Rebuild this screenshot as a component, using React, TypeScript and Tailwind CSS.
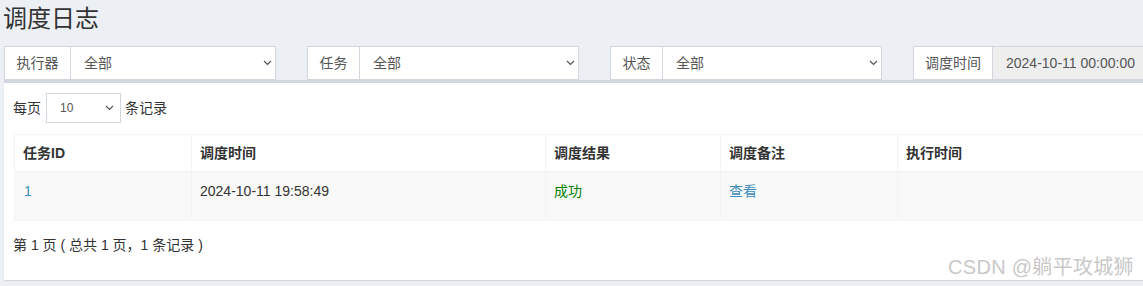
const FONT = "font-['Liberation_Sans','Noto_Sans_CJK_SC',sans-serif]";

const Chevron = () => (
  <svg width="9" height="6" viewBox="0 0 9 6" className="shrink-0">
    <path d="M1 1l3.5 3.5L8 1" fill="none" stroke="#555" strokeWidth="1.2" />
  </svg>
);

const filters = [
  { label: "执行器", value: "全部", labelW: "w-[67px]" },
  { label: "任务", value: "全部", labelW: "w-[53px]" },
  { label: "状态", value: "全部", labelW: "w-[53px]" },
];

const cols = [
  { title: "任务ID", w: "w-[176px]" },
  { title: "调度时间", w: "w-[354px]" },
  { title: "调度结果", w: "w-[175px]" },
  { title: "调度备注", w: "w-[177px]" },
  { title: "执行时间", w: "flex-1" },
];

export default function App() {
  return (
    <div className={`relative h-[286px] w-[1143px] overflow-hidden bg-[#ecf0f5] ${FONT} text-[14px] text-[#333]`}>
      {/* 标题 */}
      <h1 className="h-[46px] pl-[3px] pt-[4px] text-[24px] leading-[30px] text-[#333]">调度日志</h1>

      {/* 筛选条件 */}
      <div className="flex h-[34px] gap-[31px] pl-[4px]">
        {filters.map((f) => (
          <div key={f.label} className="flex w-[272px] shrink-0">
            <div className={`${f.labelW} flex shrink-0 items-center justify-center border border-[#d2d6de] bg-white text-[#555]`}>
              {f.label}
            </div>
            <div className="flex flex-1 items-center justify-between border border-l-0 border-[#d2d6de] bg-white pl-[13px] pr-[3px] text-[#555]">
              <span>全部</span>
              <Chevron />
            </div>
          </div>
        ))}
        <div className="flex w-[300px] shrink-0">
          <div className="flex w-[80px] shrink-0 items-center justify-center border border-[#d2d6de] bg-white text-[#555]">
            调度时间
          </div>
          <div className="flex flex-1 items-center border-y border-[#d2d6de] bg-[#eeeeee] pl-[13px] text-[#555]">
            2024-10-11 00:00:00
          </div>
        </div>
      </div>

      {/* 列表 */}
      <div className="ml-[4px] h-[200px] w-[1160px] border-t-[3px] border-[#d2d6de] bg-white px-[10px] pt-[10px] shadow-[0_1px_1px_rgba(0,0,0,0.1)]">
        <div className="flex h-[30px] items-center">
          <span className="-ml-[1px] mr-[5px]">每页</span>
          <div className="flex h-[30px] w-[75px] items-center justify-between border border-[#d2d6de] pl-[13px] pr-[6px] text-[12px] text-[#555]">
            <span>10</span>
            <Chevron />
          </div>
          <span className="ml-[4px]">条记录</span>
        </div>

        <div className="mt-[11px] border border-[#f4f4f4]">
          <div className="flex h-[38px] border-b-2 border-[#f4f4f4] font-bold">
            {cols.map((c, i) => (
              <div key={c.title} className={`${c.w} flex items-center px-[8px] ${i > 0 ? "border-l border-[#f4f4f4]" : ""}`}>
                {c.title}
              </div>
            ))}
          </div>
          <div className="flex h-[47px] bg-[#f9f9f9]">
            <div className="w-[176px] px-[9px] pt-[8px] text-[#3c8dbc]">1</div>
            <div className="w-[354px] border-l border-[#f4f4f4] px-[8px] pt-[8px]">2024-10-11 19:58:49</div>
            <div className="w-[175px] border-l border-[#f4f4f4] px-[8px] pt-[8px] text-[#008000]">成功</div>
            <div className="w-[177px] border-l border-[#f4f4f4] px-[8px] pt-[8px] text-[#3c8dbc]">查看</div>
            <div className="flex-1 border-l border-[#f4f4f4]" />
          </div>
        </div>

        <p className="mt-[14px] -ml-[1px]">第 1 页 ( 总共 1 页，1 条记录 )</p>
      </div>

      {/* 水印 */}
      <div className="absolute left-[948px] top-[252px] text-[20px] font-normal tracking-[0.3px] text-[#c8c8c8]">
        CSDN @躺平攻城狮
      </div>
    </div>
  );
}
